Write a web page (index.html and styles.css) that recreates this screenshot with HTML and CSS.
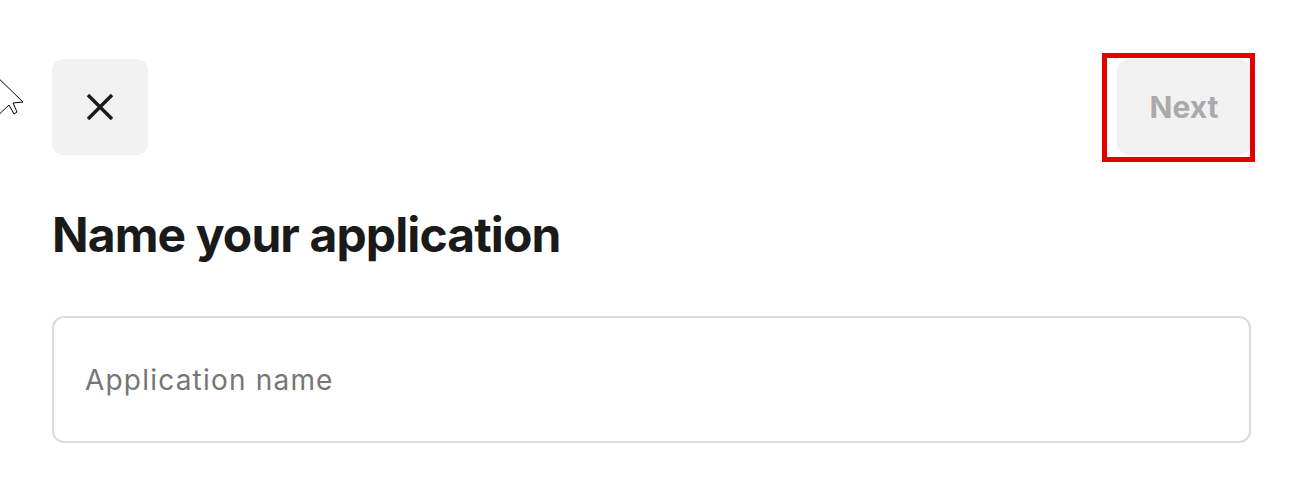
FILE: index.html
```html
<!DOCTYPE html>
<html lang="en">
<head>
    <meta charset="UTF-8">
    <meta name="viewport" content="width=device-width, initial-scale=1.0">
    <title>Name your application</title>
    <link rel="stylesheet" href="styles.css">
</head>
<body>
    <div class="page">
        <div class="top-bar">
            <button class="close-button" aria-label="Close">
                <svg width="28" height="28" viewBox="0 0 28 28">
                    <path d="M2 2 L26 26 M26 2 L2 26" stroke="#1a1a1a" stroke-width="3.4" fill="none"/>
                </svg>
            </button>
            <button class="next-button" disabled>Next</button>
        </div>
        <h1 class="title">Name your application</h1>
        <input class="name-input" type="text" placeholder="Application name">
    </div>

    <!-- highlight box around the Next button -->
    <div class="highlight"></div>

    <!-- mouse pointer -->
    <svg class="pointer" width="40" height="70" viewBox="0 0 40 70">
        <polygon points="-10,10 23,42 13,43 17,52 14,54 9,45 -10,63" fill="#fff" stroke="#000" stroke-width="1"/>
    </svg>
</body>
</html>
```

FILE: styles.css
```css
body {
    margin: 0;
    background-color: #fff;
    font-family: Inter, "Noto Sans", Arial, sans-serif;
    color: #1a1a1a;
}
.page {
    padding: 59px 42px 0 52px;
}
.top-bar {
    display: flex;
    justify-content: space-between;
    align-items: center;
}
.close-button {
    width: 96px;
    height: 96px;
    border: none;
    border-radius: 12px;
    background-color: #f1f1f1;
    display: flex;
    align-items: center;
    justify-content: center;
    padding: 0;
    cursor: pointer;
}
.next-button {
    width: 134px;
    height: 96px;
    border: none;
    border-radius: 12px;
    background-color: #f1f1f1;
    color: #aaaaaa;
    font-family: Inter, Arial, sans-serif;
    font-weight: 700;
    font-size: 30px;
    padding: 0;
}
.title {
    font-size: 48px;
    font-weight: 700;
    letter-spacing: -0.9px;
    line-height: 58px;
    margin: 51px 0 0;
}
.name-input {
    display: block;
    box-sizing: border-box;
    width: 100%;
    height: 127px;
    margin-top: 52px;
    border: 2px solid #dcdcdc;
    border-radius: 12px;
    padding: 0 31px;
    font-family: Inter, Arial, sans-serif;
    font-size: 28px;
    letter-spacing: 1.2px;
    color: #1a1a1a;
    outline: none;
}
.name-input::placeholder {
    color: #767676;
}
.highlight {
    position: absolute;
    left: 1102px;
    top: 53px;
    width: 143px;
    height: 99px;
    border: 5px solid #e50000;
}
.pointer {
    position: absolute;
    left: 0;
    top: 60px;
    overflow: visible;
}
```
